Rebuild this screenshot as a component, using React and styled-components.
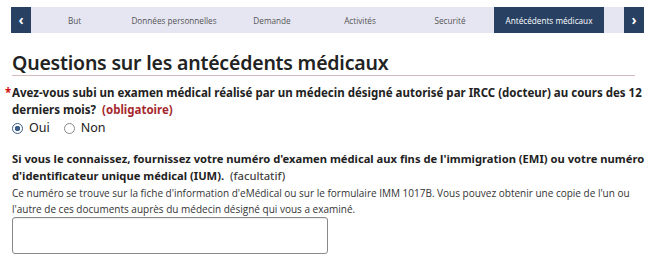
import styled, { createGlobalStyle } from "styled-components";

const Global = createGlobalStyle`
  body {
    margin: 0;
    background: #fff;
    font-family: "Noto Sans", "Open Sans", sans-serif;
    color: #333;
  }
`;

const tabs = [
  { label: "But", w: 87 },
  { label: "Données personnelles", w: 112 },
  { label: "Demande", w: 84 },
  { label: "Activités", w: 92 },
  { label: "Securité", w: 88 },
  { label: "Antécédents médicaux", w: 110, active: true },
];

export default function App() {
  return (
    <Page>
      <Global />
      <Nav>
        <Arrow>‹</Arrow>
        {tabs.map((t) => (
          <Tab key={t.label} $w={t.w} $active={t.active}>
            {t.label}
          </Tab>
        ))}
        <Spacer />
        <Arrow>›</Arrow>
      </Nav>

      <Title>Questions sur les antécédents médicaux</Title>

      <Question>
        <Star>*</Star>
        Avez-vous subi un examen médical réalisé par un médecin désigné autorisé par IRCC (docteur) au cours des 12
        derniers mois? <Required>(obligatoire)</Required>
      </Question>
      <Radios>
        <RadioLabel>
          <Radio $checked />
          Oui
        </RadioLabel>
        <RadioLabel>
          <Radio />
          Non
        </RadioLabel>
      </Radios>

      <Question2>
        Si vous le connaissez, fournissez votre numéro d'examen médical aux fins de l'immigration (EMI) ou votre numéro
        d'identificateur unique médical (IUM). <Optional>(facultatif)</Optional>
      </Question2>
      <Help>
        Ce numéro se trouve sur la fiche d'information d'eMédical ou sur le formulaire IMM 1017B. Vous pouvez obtenir une
        copie de l'un ou l'autre de ces documents auprès du médecin désigné qui vous a examiné.
      </Help>
      <Input type="text" />
    </Page>
  );
}

const Page = styled.div`
  padding: 7px 11px 0 12px;
`;

const Nav = styled.div`
  display: flex;
  height: 26px;
  width: 633px;
  margin-left: -1px;
  background: #e6e6f2;
`;

const Arrow = styled.div`
  width: 20px;
  background: #284162;
  color: #fff;
  display: flex;
  align-items: center;
  justify-content: center;
  font-family: "Open Sans", sans-serif;
  font-size: 14px;
  font-weight: 700;
  padding-bottom: 2px;
  box-sizing: border-box;
`;

const Tab = styled.div`
  width: ${(p) => p.$w}px;
  display: flex;
  align-items: center;
  justify-content: center;
  font-family: "Open Sans", sans-serif;
  font-size: 8.2px;
  white-space: nowrap;
  color: ${(p) => (p.$active ? "#fff" : "#555")};
  background: ${(p) => (p.$active ? "#284162" : "transparent")};
`;

const Spacer = styled.div`
  flex: 1;
`;

const Title = styled.h1`
  margin: 17px 0 0;
  padding: 0;
  width: 623px;
  border-bottom: 1px solid #d4bcbe;
  font-size: 19.5px;
  font-weight: 600;
  letter-spacing: -0.2px;
  line-height: 25px;
  color: #222;
`;

const Question = styled.div`
  position: relative;
  margin-top: 8px;
  font-size: 11.5px;
  font-weight: 700;
  line-height: 17px;
  color: #222;
`;

const Star = styled.span`
  position: absolute;
  left: -7px;
  top: 0;
  color: #d3080c;
`;

const Required = styled.span`
  color: #a6282e;
  margin-left: 3px;
`;

const Radios = styled.div`
  display: flex;
  gap: 14px;
  margin-top: 1px;
`;

const RadioLabel = styled.label`
  display: flex;
  align-items: center;
  gap: 6px;
  font-size: 12.5px;
  line-height: 18px;
  color: #222;
`;

const Radio = styled.span`
  width: 9px;
  height: 9px;
  border-radius: 50%;
  border: 1px solid #888;
  background: ${(p) => (p.$checked ? "radial-gradient(circle, #3b5f8a 0 2.5px, #fff 3px)" : "#fff")};
  border-color: ${(p) => (p.$checked ? "#3b5f8a" : "#888")};
`;

const Question2 = styled(Question)`
  margin-top: 13px;
  font-size: 11.2px;
`;

const Optional = styled.span`
  font-weight: 500;
  color: #444;
  margin-left: 3px;
`;

const Help = styled.div`
  font-family: "Open Sans", sans-serif;
  font-size: 10px;
  line-height: 16px;
  color: #333;
  margin-top: 1px;
  padding-right: 2px;
`;

const Input = styled.input`
  display: block;
  box-sizing: border-box;
  margin-top: 0;
  width: 316px;
  height: 37px;
  border: 1px solid #8a8a8a;
  border-radius: 3px;
  box-shadow: inset 0 1px 1px rgba(0, 0, 0, 0.08);
`;
